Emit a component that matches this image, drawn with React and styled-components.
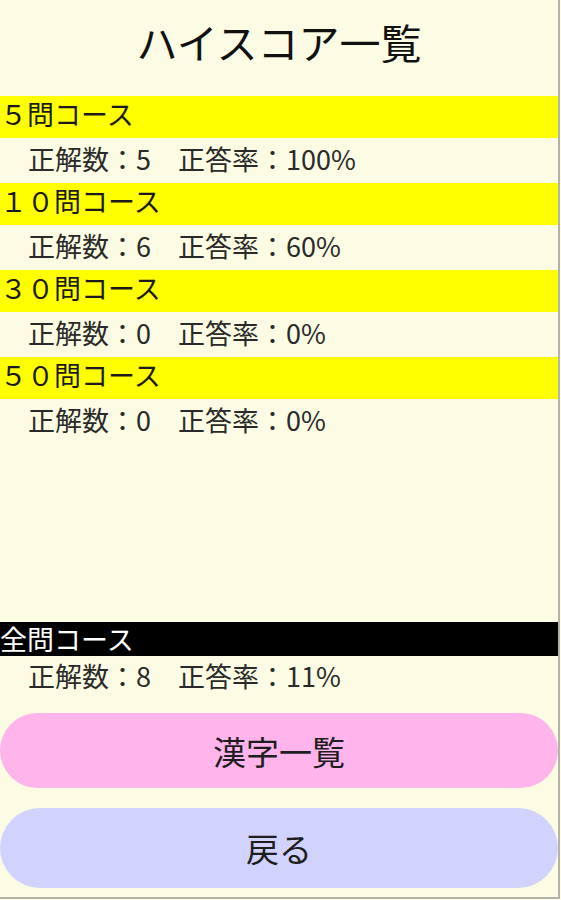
import React from 'react'
import styled, { createGlobalStyle } from 'styled-components'

const GlobalStyle = createGlobalStyle`
  html, body {
    margin: 0;
    padding: 0;
    background: #fcfce6;
  }
`

const Screen = styled.div`
  box-sizing: border-box;
  width: 560px;
  height: 899px;
  display: flex;
  flex-direction: column;
  background: #fcfce4;
  border-right: 2px solid #b4b4aa;
  border-bottom: 2px solid #b4b4aa;
  font-family: "Noto Sans CJK JP", "Noto Sans", sans-serif;
  color: #222;
  overflow: hidden;
`

const Title = styled.h1`
  box-sizing: border-box;
  height: 96px;
  margin: 0;
  padding-top: 17px;
  font-size: 41px;
  line-height: 48px;
  font-weight: 400;
  text-align: center;
  color: #111;
`

const CourseBar = styled.div`
  height: ${p => p.$h}px;
  line-height: ${p => p.$lh}px;
  font-size: 27px;
  white-space: nowrap;
  background: ${p => (p.$dark ? '#000' : '#ffff00')};
  color: ${p => (p.$dark ? '#fff' : '#1a1a1a')};
`

const StatRow = styled.div`
  height: ${p => p.$h}px;
  line-height: ${p => p.$lh}px;
  padding-left: 28px;
  font-size: 27px;
  color: #2a2a2a;
  white-space: nowrap;
`

const Spacer = styled.div`
  flex: 1;
`

const Bottom = styled.div`
  display: flex;
  flex-direction: column;
  padding-bottom: 9px;
`

const Buttons = styled.div`
  display: flex;
  flex-direction: column;
  gap: 20px;
  margin-top: 15px;
`

const PillButton = styled.button`
  width: 558px;
  height: ${p => p.$h}px;
  border: none;
  border-radius: 40px;
  margin: 0;
  padding: 0;
  background: ${p => p.$bg};
  font-family: "Noto Sans CJK JP", "Noto Sans", sans-serif;
  font-size: 33px;
  color: #1e1e1e;
  cursor: pointer;
`

const courses = [
  { label: '５問コース', correct: 5, rate: 100 },
  { label: '１０問コース', correct: 6, rate: 60 },
  { label: '３０問コース', correct: 0, rate: 0 },
  { label: '５０問コース', correct: 0, rate: 0 },
]

function Stat({ correct, rate, h, lh }) {
  return <StatRow $h={h} $lh={lh}>正解数：{correct}　正答率：{rate}%</StatRow>
}

export default function App() {
  return (
    <Screen>
      <GlobalStyle />
      <Title>ハイスコア一覧</Title>
      {courses.map(c => (
        <div key={c.label}>
          <CourseBar $h={42} $lh={36}>{c.label}</CourseBar>
          <Stat correct={c.correct} rate={c.rate} h={45} lh={42} />
        </div>
      ))}
      <Spacer />
      <Bottom>
        <CourseBar $h={34} $lh={33} $dark>全問コース</CourseBar>
        <Stat correct={8} rate={11} h={42} lh={40} />
        <Buttons>
          <PillButton $h={75} $bg="#ffb4ec">漢字一覧</PillButton>
          <PillButton $h={80} $bg="#d2d2fe">戻る</PillButton>
        </Buttons>
      </Bottom>
    </Screen>
  )
}
